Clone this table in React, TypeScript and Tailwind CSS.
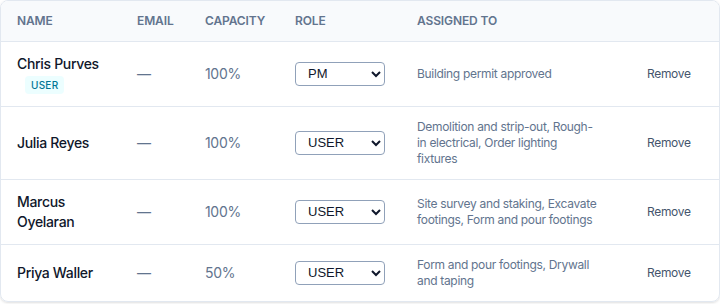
import React from "react";

type Row = {
  name: string;
  badge?: string;
  capacity: string;
  role: string;
  assigned: string;
};

const rows: Row[] = [
  { name: "Chris Purves", badge: "USER", capacity: "100%", role: "PM", assigned: "Building permit approved" },
  { name: "Julia Reyes", capacity: "100%", role: "USER", assigned: "Demolition and strip-out, Rough-in electrical, Order lighting fixtures" },
  { name: "Marcus Oyelaran", capacity: "100%", role: "USER", assigned: "Site survey and staking, Excavate footings, Form and pour footings" },
  { name: "Priya Waller", capacity: "50%", role: "USER", assigned: "Form and pour footings, Drywall and taping" },
];

export default function App() {
  return (
    <div className="w-[720px] h-[304px] bg-white tracking-[-0.02em]" style={{ fontFamily: "Inter, 'Noto Sans', sans-serif" }}>
      <div className="rounded-lg border border-slate-200 overflow-hidden shadow-sm">
        <table className="w-full border-collapse table-fixed">
          <colgroup>
            <col className="w-[120px]" />
            <col className="w-[68px]" />
            <col className="w-[90px]" />
            <col className="w-[122px]" />
            <col className="w-[230px]" />
            <col />
          </colgroup>
          <thead>
            <tr className="bg-slate-50 border-b border-slate-200">
              {["Name", "Email", "Capacity", "Role", "Assigned to", ""].map((h, i) => (
                <th key={i} className="h-10 px-4 text-left text-xs font-semibold uppercase text-slate-500 tracking-[-0.01em]">
                  {h}
                </th>
              ))}
            </tr>
          </thead>
          <tbody>
            {rows.map((r, i) => (
              <tr key={i} className={i < rows.length - 1 ? "border-b border-slate-200" : ""}>
                <td className="px-4 py-3 align-middle">
                  <div className="text-sm leading-5 font-medium text-slate-900">{r.name}</div>
                  {r.badge && (
                    <div className="ml-2 mt-0.5 w-fit rounded px-1.5 py-0.5 text-[10px] leading-[14px] font-medium tracking-wide text-cyan-700 bg-cyan-50">
                      {r.badge}
                    </div>
                  )}
                </td>
                <td className="px-4 py-3 text-sm text-slate-500">—</td>
                <td className="px-4 py-3 text-sm text-slate-500">{r.capacity}</td>
                <td className="px-4 py-3">
                  <select
                    defaultValue={r.role}
                    className="block h-6 w-[90px] rounded-[4px] border border-slate-400 bg-white pl-2 pr-1 text-[13px] tracking-normal text-slate-900"
                    style={{ fontFamily: "'Liberation Sans', Arial, sans-serif" }}
                  >
                    <option value="PM">PM</option>
                    <option value="USER">USER</option>
                  </select>
                </td>
                <td className="px-4 py-3 text-xs leading-4 text-slate-500">
                  <div className="max-w-[183px]">{r.assigned}</div>
                </td>
                <td className="px-4 py-3 text-xs text-slate-600">Remove</td>
              </tr>
            ))}
          </tbody>
        </table>
      </div>
    </div>
  );
}
